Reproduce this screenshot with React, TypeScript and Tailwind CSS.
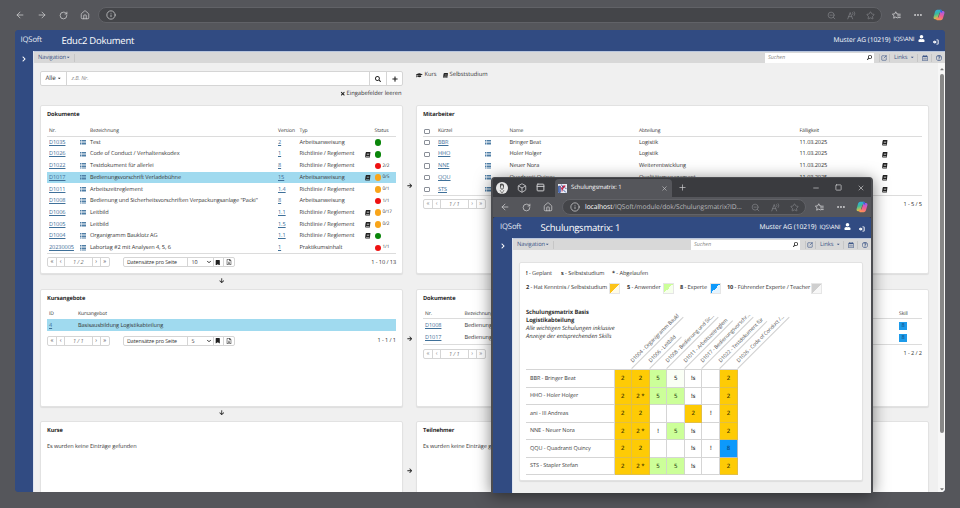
import type { ReactNode } from "react";
import clsx from "clsx";
import {
    FaBook,
    FaArrowRight,
    FaArrowDown,
    FaGraduationCap,
    FaBookmark,
    FaUser,
    FaSearch,
    FaPlus,
    FaTimes,
    FaCaretDown,
    FaCaretUp,
    FaRegCalendarAlt,
    FaRegQuestionCircle,
    FaChevronRight,
    FaRegFileExcel,
} from "react-icons/fa";
import {
    ArrowLeft,
    ArrowRight,
    RotateCw,
    House,
    Info,
    ZoomOut,
    Star,
    Ellipsis,
    Minus,
    Square,
    X,
    Plus,
    Box,
    PanelTop,
    SquareArrowOutUpRight,
    ChevronDown,
} from "lucide-react";

type DocumentRow = {
    nr: string;
    title: string;
    version: string;
    type: string;
    book?: boolean;
    status: "green" | "red" | "orange";
    count?: string;
    active?: boolean;
};

const documents: DocumentRow[] = [
    { nr: "D1035", title: "Test", version: "2", type: "Arbeitsanweisung", status: "green" },
    { nr: "D1026", title: "Code of Conduct / Verhaltenskodex", version: "1", type: "Richtlinie / Reglement", book: true, status: "green" },
    { nr: "D1022", title: "Testdokument für allerlei", version: "8", type: "Richtlinie / Reglement", status: "red", count: "2/2" },
    { nr: "D1017", title: "Bedienungsvorschrift Verladebühne", version: "15", type: "Arbeitsanweisung", book: true, status: "orange", count: "0/5", active: true },
    { nr: "D1011", title: "Arbeitszeitreglement", version: "1.4", type: "Richtlinie / Reglement", status: "orange", count: "0/1" },
    { nr: "D1008", title: 'Bedienung und Sicherheitsvorschriften Verpackungsanlage "Packi"', version: "8", type: "Arbeitsanweisung", status: "red", count: "1/1" },
    { nr: "D1006", title: "Leitbild", version: "1.1", type: "Richtlinie / Reglement", book: true, status: "orange", count: "0/17" },
    { nr: "D1005", title: "Leitbild", version: "1.5", type: "Richtlinie / Reglement", book: true, status: "orange", count: "0/2" },
    { nr: "D1004", title: "Organigramm Bauklotz AG", version: "1.1", type: "Richtlinie / Reglement", book: true, status: "green" },
    { nr: "20230005", title: "Labortag #2 mit Analysen 4, 5, 6", version: "1", type: "Praktikumsinhalt", status: "red", count: "1/1" },
];

const employees = [
    { code: "BBR", name: "Bringer Beat", department: "Logistik" },
    { code: "HHO", name: "Holer Holger", department: "Logistik" },
    { code: "NNE", name: "Neuer Nora", department: "Weiterentwicklung" },
    { code: "QQU", name: "Quadranti Quincy", department: "Qualitätsmanagement" },
    { code: "STS", name: "Stapler Stefan", department: "Logistik" },
];

const matrixColumns = [
    { label: "D1004 - Organigramm Baukl", line: "w-[73px]" },
    { label: "D1006 - Leitbild", line: "w-[45px]" },
    { label: "D1008 - Bedienung und Sic...", line: "w-[73px]" },
    { label: "D1011 - Arbeitszeitreglem", line: "w-[68px]" },
    { label: "D1017 - Bedienungsvorschr...", line: "w-[73px]" },
    { label: "D1022 - Testdokument für", line: "w-[67px]" },
    { label: "D1026 - Code of Conduct /...", line: "w-[73px]" },
];

const matrixRows = [
    { name: "BBR - Bringer Beat", cells: ["2", "2", "5", "5~", "!s", "", "2"] },
    { name: "HHO - Holer Holger", cells: ["2", "2 *", "5", "5", "!s", "", "2"] },
    { name: "ani - III Andreas", cells: ["2", "2", "", "", "2", "!", "2"] },
    { name: "NNE - Neuer Nora", cells: ["2", "2 *", "!", "5", "!s", "", "2"] },
    { name: "QQU - Quadranti Quincy", cells: ["2", "2", "", "", "!s", "!", "8"] },
    { name: "STS - Stapler Stefan", cells: ["2", "2 *", "5", "5", "!s", "", "2"] },
];

const dotColors = { green: "bg-[#0a860a]", red: "bg-[#ee1111]", orange: "bg-[#f9a51a]" };

function CopilotIcon() {
    return (
        <svg viewBox="0 0 24 24" className="size-[12px] shrink-0">
            <defs>
                <linearGradient id="cpLeft" x1="0" y1="0" x2="0.3" y2="1">
                    <stop offset="0" stopColor="#2aa7ee" />
                    <stop offset="0.5" stopColor="#3dbb9a" />
                    <stop offset="1" stopColor="#f2c43a" />
                </linearGradient>
                <linearGradient id="cpRight" x1="0.6" y1="0" x2="0.3" y2="1">
                    <stop offset="0" stopColor="#a45bea" />
                    <stop offset="0.5" stopColor="#ee5d94" />
                    <stop offset="1" stopColor="#fb9650" />
                </linearGradient>
            </defs>
            <path d="M15 1.500c2 0 2.500 1.300 3 3l.7 2.500h-3.500c-1.800 0-2.500.8-3 2.500l-2.500 8c-.6 2-1.400 3-3.300 3H4.500c-3 0-4-2.200-3.200-5l2.500-9c.8-3 2-5 5-5z" fill="url(#cpLeft)" />
            <path d="M9 22.500c-2 0-2.600-1.300-3-3l-.6-2h3.300c1.800 0 2.500-.8 3-2.500l2.500-8c.6-2 1.400-3 3.300-3h2c3 0 4 2.200 3.200 5l-2.500 8.500c-.8 3-2 5-5 5z" fill="url(#cpRight)" />
            <path d="M14 1.500h1c2 0 2.500 1.300 3 3l.7 2.500h-3.200z" fill="#3462dd" />
        </svg>
    );
}

function ReadAloudIcon() {
    return (
        <svg viewBox="0 0 24 24" className="size-[9px]" fill="none" stroke="currentColor" strokeWidth="1.800" strokeLinecap="round">
            <path d="M2 21 8.500 4 15 21M4.300 15h8.400" />
            <path d="M15 4c1.300 1.500 1.300 4 0 5.500M19 2c2.400 3 2.400 7 0 10" />
        </svg>
    );
}

function FavoritesIcon() {
    return (
        <svg viewBox="0 0 24 24" className="size-[9px] shrink-0" fill="none" stroke="currentColor" strokeWidth="2.200" strokeLinejoin="round" strokeLinecap="round">
            <path d="M15.500 8 12.800 7.600 10 2 7.200 7.600 1 8.500l4.500 4.400-1 6.300 5.500-3 4 2.200" />
            <path d="M16 8.500h6M15 13h7M16 17.500h6" />
        </svg>
    );
}

function SignOutIcon() {
    return (
        <svg viewBox="0 0 16 16" className="size-[6px]" fill="currentColor">
            <path d="M0 6h4V3l6 5-6 5v-3H0z" />
            <path d="M9 1.500h3.500A2.500 2.500 0 0 1 15 4v8a2.500 2.500 0 0 1-2.500 2.500H9v-2h3.500V3.500H9z" />
        </svg>
    );
}

function TabLogo() {
    return (
        <svg viewBox="0 0 16 16" className="size-[9px]">
            <path d="M0 0h16v16H0z" fill="#e9edf5" />
            <path d="M1 4h3v11H1zM9 10l5 5" stroke="#2c4fa0" strokeWidth="1.500" fill="#6d88c4" />
            <path d="M3 2l4 5 3-5 4 1-5 6-2 6-1-6z" fill="#c52848" />
            <path d="M6 1l3 5M12 6l3 3" stroke="#2c3e7a" strokeWidth="1.500" />
        </svg>
    );
}

function ListIcon() {
    return (
        <svg viewBox="0 0 12 11" className="h-[5.500px] w-[6px]" fill="#4f7ea6">
            <path d="M0 0h3v2H0zM4 0h8v2H4zM0 3h3v2H0zM4 3h8v2H4zM0 6h3v2H0zM4 6h8v2H4zM0 9h3v2H0zM4 9h8v2H4z" />
        </svg>
    );
}

function BrowserBar({ url, popup = false }: { url?: ReactNode; popup?: boolean }) {
    return (
        <div
            className={clsx(
                "flex shrink-0 items-center bg-[#55565b] text-[#d0d0d2]",
                popup ? "h-[20px] pl-[7px] pr-[3px]" : "h-[30px] pl-[15px] pr-[15px]"
            )}
        >
            <div className={clsx("flex shrink-0 items-center gap-[12px]", popup ? "w-[62px]" : "w-[83px]")}>
                <ArrowLeft className="size-[10px]" strokeWidth={1.8} />
                {!popup && <ArrowRight className="size-[10px]" strokeWidth={1.8} />}
                <RotateCw className="size-[9px]" strokeWidth={2} />
                <House className="size-[10px]" strokeWidth={1.8} />
            </div>
            <div className="flex h-[16px] min-w-0 flex-1 items-center rounded-full border border-[#616267] bg-[#444549] pl-[7px] pr-[6px]">
                <Info className="size-[10px] shrink-0" strokeWidth={1.8} />
                <span className="ml-[5px] min-w-0 flex-1 whitespace-nowrap text-[6.700px] tracking-[-0.06px] text-[#b8b8bb]">{url}</span>
                <div className="flex shrink-0 items-center gap-[10.500px] text-[#85868a]">
                    <ZoomOut className="size-[9px]" strokeWidth={1.8} />
                    <ReadAloudIcon />
                    <Star className="size-[9px]" strokeWidth={1.8} />
                </div>
            </div>
            <div className={clsx("flex shrink-0 items-center justify-end", popup ? "w-[62px]" : "w-[63px]")}>
                <FavoritesIcon />
                <Ellipsis className="ml-[12px] mr-[10px] size-[10px] shrink-0" strokeWidth={2.6} />
                <CopilotIcon />
            </div>
        </div>
    );
}

function AppHeader({ title, popup = false }: { title: string; popup?: boolean }) {
    return (
        <header className={clsx("flex h-[21px] shrink-0 items-center bg-[#314b82] text-white", popup && "pt-[1px]")}>
            <span className={clsx("text-[7.700px] tracking-[-0.15px] text-[#e3e8f2]", popup ? "w-[47.500px] pl-[7px]" : "w-[46.500px] pl-[5.500px]")}>IQSoft</span>
            <span className="flex-1 text-[9.500px] font-medium tracking-[-0.25px]">{title}</span>
            <span className="w-[60px] whitespace-nowrap pb-[1px] text-[6.700px] font-medium tracking-[-0.05px]">Muster AG (10219)</span>
            <span className="w-[24.500px] pb-[3px] text-[6px] tracking-[-0.15px]">IQS\ANI</span>
            <FaUser className="mb-[4px] size-[7px]" />
            <span className="ml-[8px] mr-[6px] mt-[2px]">
                <SignOutIcon />
            </span>
        </header>
    );
}

function NavBar() {
    return (
        <nav className="flex h-[12px] shrink-0 items-center border-t border-[#b9c6dd] bg-[#d8d8d8] text-[5.800px] text-[#3d5687]">
            <span className="w-[32px] pl-[4px]">Navigation</span>
            <FaCaretDown className="size-[4.500px]" />
            <span className="ml-[3.500px] h-[8px] w-px bg-[#c6c6c6]" />
            <span className="flex-1" />
            <span className="flex h-[10px] w-[109px] items-center justify-between bg-white pl-[3px] pr-[2px] text-[5.500px] italic text-[#8c8c8c]">
                Suchen
                <FaSearch className="size-[5px] -scale-x-100 text-[#222]" />
            </span>
            <span className="ml-[5px] h-[8px] w-px bg-[#c6c6c6]" />
            <SquareArrowOutUpRight className="ml-px size-[6px]" strokeWidth={2.5} />
            <span className="ml-[2px] h-[8px] w-px bg-[#c6c6c6]" />
            <span className="ml-[4px] w-[16px]">Links</span>
            <FaCaretDown className="size-[4.500px]" />
            <span className="ml-[2px] h-[8px] w-px bg-[#c6c6c6]" />
            <FaRegCalendarAlt className="ml-[4px] size-[6px]" />
            <span className="ml-[3px] h-[8px] w-px bg-[#c6c6c6]" />
            <FaRegQuestionCircle className="ml-[4px] mr-[3.500px] size-[6px]" />
        </nav>
    );
}

function Card({ title, className, children }: { title: string; className?: string; children: ReactNode }) {
    return (
        <section className={clsx("flex flex-col rounded-[2px] border border-[#e2e2e2] bg-white px-[6px] shadow-[0_1px_1px_rgba(0,0,0,0.08)]", className)}>
            <h2 className="mt-[4px] h-[8px] text-[5.700px] font-bold leading-[8px] tracking-[-0.12px] text-[#2b2b2b]">{title}</h2>
            {children}
        </section>
    );
}

function Pager({ page, muted = false }: { page: string; muted?: boolean }) {
    return (
        <div className={clsx("flex h-[10px] items-stretch divide-x divide-[#d5d5d5] rounded-[2px] border border-[#d5d5d5] text-center text-[6px] leading-[7px]", muted ? "text-[#888]" : "text-[#555]")}>
            <span className="w-[9px]">«</span>
            <span className="w-[8px]">‹</span>
            <span className="w-[27.500px] text-[5.600px] italic leading-[8.500px] text-[#777]">{page}</span>
            <span className="w-[8px]">›</span>
            <span className="w-[8.500px]">»</span>
        </div>
    );
}

function PageSize({ size }: { size: string }) {
    return (
        <div className="ml-[13px] flex h-[10px] items-stretch divide-x divide-[#d5d5d5] rounded-[2px] border border-[#d5d5d5] text-[5.400px] leading-[8.500px] tracking-[-0.1px] text-[#333]">
            <span className="w-[63.500px] pl-[3px]">Datensätze pro Seite</span>
            <span className="flex w-[26px] items-center justify-between pl-[4px] pr-[1px]">
                {size}
                <ChevronDown className="size-[6px]" strokeWidth={4} />
            </span>
            <span className="flex w-[10px] items-center justify-center text-[#222]">
                <FaBookmark className="size-[5.500px]" />
            </span>
            <span className="flex w-[10px] items-center justify-center">
                <FaRegFileExcel className="size-[6px]" />
            </span>
        </div>
    );
}

function Link({ children }: { children: ReactNode }) {
    return <a className="text-[#3f7099] underline decoration-[0.5px] underline-offset-1">{children}</a>;
}

function Checkbox() {
    return <span className="block size-[5.500px] rounded-[1px] border border-[#8a8f98] bg-white" />;
}

function DocumentsCard() {
    return (
        <Card title="Dokumente" className="h-[169px]">
            <div className="mt-[8px] grid h-[10.500px] grid-cols-[31px_10px_188px_21.500px_65px_10px_1fr] items-center border-b border-[#dcdcdc] pl-[2px] pt-[1px] text-[5px] text-[#333]">
                <span>Nr.</span>
                <span />
                <span>Bezeichnung</span>
                <span>Version</span>
                <span>Typ</span>
                <span />
                <span>Status</span>
            </div>
            <div className="border-b border-[#dcdcdc]">
                {documents.map((doc) => (
                    <div
                        key={doc.nr}
                        className={clsx(
                            "grid h-[11.700px] grid-cols-[31px_10px_188px_21.500px_65px_10px_1fr] items-center whitespace-nowrap pl-[2px] pt-[0.500px]",
                            doc.active && "bg-[#a0daef]"
                        )}
                    >
                        <Link>{doc.nr}</Link>
                        <ListIcon />
                        <span>{doc.title}</span>
                        <Link>{doc.version}</Link>
                        <span>{doc.type}</span>
                        <span>{doc.book && <FaBook className="size-[5.500px] -skew-x-6 text-[#222]" />}</span>
                        <span className="flex items-center gap-[1.500px] text-[4.700px]">
                            <span className={clsx("size-[6.500px] rounded-full", dotColors[doc.status])} />
                            {doc.count}
                        </span>
                    </div>
                ))}
            </div>
            <div className="mt-[3px] flex items-center">
                <Pager page="1 / 2" />
                <PageSize size="10" />
                <span className="ml-auto">1 - 10 / 13</span>
            </div>
        </Card>
    );
}

function EmployeesCard() {
    return (
        <Card title="Mitarbeiter" className="h-[169px]">
            <div className="mt-[8px] grid h-[10.500px] grid-cols-[14px_46.500px_25px_129.500px_160.500px_82px_1fr] items-center border-b border-[#dcdcdc] pl-[1px] pt-[1px] text-[5px] text-[#333]">
                <Checkbox />
                <span>Kürzel</span>
                <span />
                <span>Name</span>
                <span>Abteilung</span>
                <span>Fälligkeit</span>
            </div>
            <div className="border-b border-[#dcdcdc]">
                {employees.map((employee) => (
                    <div key={employee.code} className="grid h-[11.700px] grid-cols-[14px_46.500px_25px_129.500px_160.500px_82px_1fr] items-center whitespace-nowrap pl-[1px] pt-[0.500px]">
                        <Checkbox />
                        <Link>{employee.code}</Link>
                        <ListIcon />
                        <span>{employee.name}</span>
                        <span>{employee.department}</span>
                        <span>11.03.2025</span>
                        <FaBook className="size-[5.500px] -skew-x-6 text-[#222]" />
                    </div>
                ))}
            </div>
            <div className="mt-[3.500px] flex items-center">
                <Pager page="1 / 1" muted />
                <span className="ml-auto">1 - 5 / 5</span>
            </div>
        </Card>
    );
}

function CoursesCard() {
    return (
        <Card title="Kursangebote" className="h-[118px]">
            <div className="mt-[8px] grid h-[9px] grid-cols-[29px_1fr] items-center pl-[2px] text-[5px] text-[#333]">
                <span>ID</span>
                <span>Kursangebot</span>
            </div>
            <div className="grid h-[12px] grid-cols-[29px_1fr] items-center bg-[#a0daef] pl-[2px] pt-[1px]">
                <Link>4</Link>
                <span>Basisausbildung Logistikabteilung</span>
            </div>
            <div className="mt-[5px] flex items-center">
                <Pager page="1 / 1" />
                <PageSize size="5" />
                <span className="ml-auto">1 - 1 / 1</span>
            </div>
        </Card>
    );
}

function CourseDocumentsCard() {
    return (
        <Card title="Dokumente" className="h-[118px]">
            <div className="mt-[8px] grid h-[9px] grid-cols-[39.500px_434.500px_1fr] items-center border-b border-[#dcdcdc] pl-[2px] text-[5px] text-[#333]">
                <span>Nr.</span>
                <span>Bezeichnung</span>
                <span>Skill</span>
            </div>
            <div className="border-b border-[#dcdcdc] pt-[0.500px]">
                {["D1008", "D1017"].map((nr) => (
                    <div key={nr} className="grid h-[12.300px] grid-cols-[39.500px_434.500px_1fr] items-center whitespace-nowrap pl-[2px] pt-[0.500px]">
                        <Link>{nr}</Link>
                        <span>{nr === "D1008" ? "Bedienung und Sicherheitsvorschriften" : "Bedienungsvorschrift Verladebühne"}</span>
                        <span className="flex h-[8px] w-[8px] items-center justify-center bg-[#1d9bea] text-[#134a78]">8</span>
                    </div>
                ))}
            </div>
            <div className="mt-[4px] flex items-center">
                <Pager page="1 / 1" muted />
                <span className="ml-auto">1 - 2 / 2</span>
            </div>
        </Card>
    );
}

function RightArrow({ className }: { className: string }) {
    return (
        <div className={clsx("flex items-center justify-center", className)}>
            <FaArrowRight className="size-[5.500px] text-[#222]" />
        </div>
    );
}

function DownArrow({ className }: { className: string }) {
    return (
        <div className={clsx("flex items-center justify-center", className)}>
            <FaArrowDown className="size-[5.500px] text-[#222]" />
        </div>
    );
}

function Swatch({ className }: { className: string }) {
    return <span className={clsx("ml-[2px] size-[11px] shrink-0 border border-[#e6e6e6]", className)} />;
}

function MatrixCell({ value }: { value: string }) {
    return (
        <span
            className={clsx(
                "flex w-[17.600px] items-center justify-center border-b border-r text-[6px] font-semibold",
                value.startsWith("2") && "border-[#e2bf45] bg-[#fecb05] text-[#4a3b00]",
                value === "5" && "border-[#d0d8c8] bg-[#ccff99] text-[#3c5a28]",
                value === "5~" && "border-[#d5d5d5] bg-[#fafff5] text-[#444]",
                value === "8" && "border-[#b5bcc5] bg-[#0d99fb] text-[#0a4d86]",
                (value === "" || value.startsWith("!")) && "border-[#d5d5d5] text-[#333]"
            )}
        >
            {value.replace("~", "")}
        </span>
    );
}

function SkillMatrix() {
    return (
        <section className="ml-[6px] mr-[8px] mt-[12px] h-[219px] rounded-[2px] border border-[#e2e2e2] bg-white px-[6px] text-[#333] shadow-[0_1px_1px_rgba(0,0,0,0.08)]">
            <div className="mt-[6px] flex h-[9px] items-center">
                <span className="w-[35px]"><b>!</b> - Geplant</span>
                <span className="w-[51px]"><b>s</b> - Selbststudium</span>
                <span><b>*</b> - Abgelaufen</span>
            </div>
            <div className="mt-[4px] flex h-[12px] items-center whitespace-nowrap">
                <span className="flex w-[101px] items-center"><span className="w-[81px]"><b>2</b> - Hat Kenntnis / Selbststudium</span><Swatch className="bg-[linear-gradient(135deg,#fcc419_50%,#fffbe8_50%)]" /></span>
                <span className="flex w-[53px] items-center"><span className="w-[34px]"><b>5</b> - Anwender</span><Swatch className="bg-[linear-gradient(135deg,#ccff99_50%,#f6ffec_50%)]" /></span>
                <span className="flex w-[47px] items-center"><span className="w-[27.500px]"><b>8</b> - Experte</span><Swatch className="bg-[linear-gradient(135deg,#0d99fb_50%,#e4f4ff_50%)]" /></span>
                <span className="flex items-center"><span className="w-[82px]"><b>10</b> - Führender Experte / Teacher</span><Swatch className="bg-[linear-gradient(135deg,#cfcfcf_50%,#f7f7f7_50%)]" /></span>
            </div>
            <div className="mt-[14px] flex h-[61px]">
                <div className="w-[88.500px] whitespace-nowrap text-[5.800px] leading-[8.100px]">
                    <p className="font-bold tracking-[-0.12px]">Schulungsmatrix Basis</p>
                    <p className="font-bold tracking-[-0.12px]">Logistikabteilung</p>
                    <p className="italic tracking-[-0.02px]">Alle wichtigen Schulungen inklusive</p>
                    <p className="italic tracking-[-0.02px]">Anzeige der entsprechenden Skills</p>
                </div>
                {matrixColumns.map((column) => (
                    <div key={column.label} className="flex w-[17.600px] items-end">
                        <div
                            className={clsx(
                                "ml-[17.600px] h-[9px] shrink-0 origin-bottom-left -rotate-45 whitespace-nowrap border-b border-[#d0d0d0] pl-[5px] text-[5.200px] leading-[7px] tracking-[-0.12px] text-[#555]",
                                column.line
                            )}
                        >
                            {column.label}
                        </div>
                    </div>
                ))}
            </div>
            <div className="w-[212px] border-t border-[#d5d5d5]">
                {matrixRows.map((row) => (
                    <div key={row.name} className="flex h-[17.550px]">
                        <span className="flex w-[88.500px] items-center whitespace-nowrap border-b border-r border-[#d5d5d5] pl-[4px] text-[5.500px] text-[#444]">{row.name}</span>
                        {row.cells.map((value, index) => (
                            <MatrixCell key={index} value={value} />
                        ))}
                    </div>
                ))}
            </div>
        </section>
    );
}

function MatrixWindow() {
    return (
        <div className="absolute left-[491px] top-[177px] flex h-[316px] w-[382px] flex-col overflow-hidden rounded-t-[4px] border-x-2 border-t border-[#4c4d51] bg-[#3a3b3f] shadow-[0_2px_16px_rgba(0,0,0,0.5)]">
            <div className="flex h-[19px] shrink-0 items-end bg-[#3a3b3f] text-[#d0d0d2]">
                <div className="flex h-full w-[62px] items-center gap-[9px] pl-[3px]">
                    <svg viewBox="0 0 24 24" className="size-[12px]">
                        <circle cx="12" cy="12" r="12" fill="#e8e8e8" />
                        <path d="M8 4c4-3 9 0 8 5l-1 4-3 3-3-3-1-4z" fill="#555" />
                        <path d="M10 7h4v5l-2 2-2-2z" fill="#ddd" />
                        <path d="M8 16l4 7 4-7" fill="none" stroke="#666" strokeWidth="1.500" />
                    </svg>
                    <Box className="size-[10px]" strokeWidth={2} />
                    <PanelTop className="size-[9px]" strokeWidth={2.6} />
                </div>
                <div className="flex h-[18px] w-[117px] items-center rounded-t-[4px] bg-[#55565b] pl-[3px] pr-[4px]">
                    <TabLogo />
                    <span className="ml-[4px] flex-1 text-[5.900px] tracking-[-0.1px] text-white">Schulungsmatrix: 1</span>
                    <X className="size-[7px]" strokeWidth={2} />
                </div>
                <div className="flex h-full flex-1 items-center justify-between pl-[6px] pr-[6px]">
                    <Plus className="size-[9px]" strokeWidth={1.8} />
                    <div className="flex items-center gap-[15px]">
                        <Minus className="size-[8px]" strokeWidth={2} />
                        <Square className="size-[7px]" strokeWidth={2.4} />
                        <X className="size-[8px]" strokeWidth={2} />
                    </div>
                </div>
            </div>
            <BrowserBar popup url={<><span className="text-white">localhost</span>/IQSoft/module/dok/Schulungsmatrix?ID...</>} />
            <div className="flex flex-1 flex-col overflow-hidden rounded-t-[3px] bg-[#314b82]">
                <AppHeader title="Schulungsmatrix: 1" popup />
                <div className="flex flex-1">
                    <aside className="flex w-[19px] justify-center bg-[#314b82] pt-[5px] text-white">
                        <FaChevronRight className="size-[6px]" />
                    </aside>
                    <main className="flex-1 border-l border-[#dfe4ee] bg-[#f0f0f0]">
                        <NavBar />
                        <SkillMatrix />
                    </main>
                </div>
            </div>
        </div>
    );
}

export default function App() {
    return (
        <div className="relative h-[508px] w-[960px] overflow-hidden bg-[#55565b] font-['Open_Sans','Noto_Sans',sans-serif] text-[5.600px] leading-none tracking-[-0.08px] text-[#333] [text-rendering:geometricPrecision]">
            <BrowserBar />
            <div className="ml-[15px] flex h-[462px] w-[930px] flex-col overflow-hidden rounded-[4px] bg-[#314b82]">
                <AppHeader title="Educ2 Dokument" />
                <div className="flex min-h-0 flex-1">
                    <aside className="flex w-[18px] shrink-0 justify-center bg-[#314b82] pt-[5px] text-white">
                        <FaChevronRight className="size-[6px]" />
                    </aside>
                    <main className="flex min-w-0 flex-1 flex-col border-l border-[#dfe4ee] bg-[#f0f0f0]">
                        <NavBar />
                        <div className="flex min-h-0 flex-1">
                            <div className="flex flex-1 flex-col pl-[6px] pt-[8px]">
                                <div className="flex h-[34px] shrink-0">
                                    <div className="w-[363px]">
                                        <div className="flex h-[15px] divide-x divide-[#d5d5d5] rounded-[2px] border border-[#d5d5d5] bg-white">
                                            <span className="flex w-[25.500px] items-center justify-center gap-[1px] text-[6.200px]">
                                                Alle <FaCaretDown className="size-[4.500px]" />
                                            </span>
                                            <span className="flex flex-1 items-center pl-[5px] italic text-[#888]">z.B. Nr.</span>
                                            <span className="flex w-[17px] items-center justify-center text-[#222]">
                                                <FaSearch className="size-[6px]" />
                                            </span>
                                            <span className="flex w-[15px] items-center justify-center text-[#222]">
                                                <FaPlus className="size-[6px]" />
                                            </span>
                                        </div>
                                        <div className="mt-[5px] flex items-center justify-end gap-[1.500px] pr-[1.500px] text-[5.800px] tracking-[-0.05px]">
                                            <FaTimes className="size-[5.500px] text-[#222]" /> Eingabefelder leeren
                                        </div>
                                    </div>
                                    <div className="ml-[13px] flex h-[8px] items-center text-[5.800px] tracking-[-0.05px]">
                                        <FaGraduationCap className="mr-[2px] size-[6.500px] text-[#222]" /> Kurs
                                        <FaBook className="ml-[6px] mr-[2px] size-[5px] -skew-x-6 text-[#222]" /> Selbststudium
                                    </div>
                                </div>
                                <div className="flex">
                                    <div className="flex w-[363px] flex-col">
                                        <DocumentsCard />
                                        <DownArrow className="h-[15px] pb-[1px]" />
                                        <CoursesCard />
                                        <DownArrow className="h-[14px] pb-[2px]" />
                                        <Card title="Kurse" className="h-[80px]">
                                            <p className="mt-[10px]">Es wurden keine Einträge gefunden</p>
                                        </Card>
                                    </div>
                                    <div className="flex w-[13px] flex-col">
                                        <RightArrow className="h-[161px]" />
                                        <RightArrow className="mt-[12px] h-[121px]" />
                                        <RightArrow className="mt-[12px] h-[120px]" />
                                    </div>
                                    <div className="flex w-[513px] flex-col">
                                        <EmployeesCard />
                                        <div className="h-[15px]" />
                                        <CourseDocumentsCard />
                                        <div className="h-[14px]" />
                                        <Card title="Teilnehmer" className="h-[80px]">
                                            <p className="mt-[10px]">Es wurden keine Einträge gefunden</p>
                                        </Card>
                                    </div>
                                </div>
                            </div>
                            <div className="flex w-[7px] flex-col items-center bg-[#f7f7f7] pt-[3px]">
                                <FaCaretUp className="size-[6px] text-[#777]" />
                                <div className="mb-[53px] mt-[2px] w-[4px] flex-1 rounded-full bg-[#888]" />
                                <FaCaretDown className="size-[6px] text-[#777]" />
                            </div>
                        </div>
                    </main>
                </div>
            </div>
            <MatrixWindow />
        </div>
    );
}
